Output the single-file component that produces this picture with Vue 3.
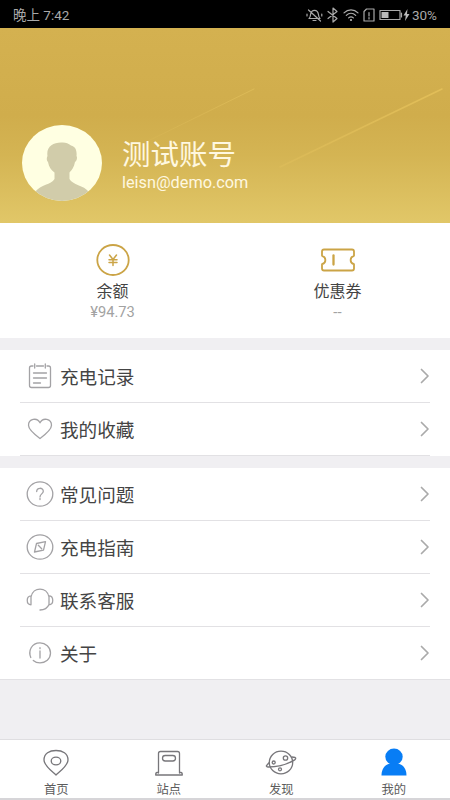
<script setup>
const groups = [
  [
    { icon: 'record', label: '充电记录' },
    { icon: 'heart', label: '我的收藏' },
  ],
  [
    { icon: 'question', label: '常见问题' },
    { icon: 'compass', label: '充电指南' },
    { icon: 'headset', label: '联系客服' },
    { icon: 'info', label: '关于' },
  ],
]
const tabs = [
  { icon: 'pin', label: '首页' },
  { icon: 'station', label: '站点' },
  { icon: 'planet', label: '发现' },
  { icon: 'me', label: '我的' },
]
</script>

<template>
  <div class="screen">
    <header class="status">
      <span class="time">晚上 7:42</span>
      <div class="indicators">
        <svg width="17" height="16" viewBox="0 0 17 16">
          <path d="M3 11.5c1.3-1 1.4-2.300 1.600-4.200C5 4.700 6.500 3.300 8.500 3.300s3.500 1.400 3.900 4c.2 1.900.4 3.200 1.600 4.200zM7 13.500h3M2.500 3l12 11M1 7v2M15.800 7v2" />
        </svg>
        <svg class="bluetooth" width="12" height="16" viewBox="0 0 12 16">
          <path d="M1 4.500l9 7L6 15V1l4 3.500-9 7" />
        </svg>
        <svg width="16" height="16" viewBox="0 0 16 16">
          <path d="M1 5.800c4-4 10-4 14 0M3.300 8.400c2.800-2.700 6.600-2.700 9.400 0M5.600 10.900c1.500-1.300 3.300-1.300 4.800 0" />
          <circle class="solid" cx="8" cy="13" r="1.100" />
        </svg>
        <svg width="12" height="14" viewBox="0 0 12 14">
          <path d="M3.500 1H11v12H1V3.500zM6 4.500v3.500M6 9.500V11" />
        </svg>
        <svg class="battery" width="24" height="12" viewBox="0 0 24 12">
          <path d="M1 1.500h20v9H1zM22.500 4v4" />
          <path class="solid" d="M2.500 3h7v6h-7z" />
        </svg>
        <svg class="bolt" width="7" height="12" viewBox="0 0 7 12">
          <path class="solid" d="M4.500 0L.5 6.500h2.300L2 12l4.500-7H4z" />
        </svg>
        <span class="percent">30%</span>
      </div>
    </header>

    <section class="hero">
      <svg class="streaks" width="450" height="195" viewBox="0 0 450 195">
        <defs>
          <linearGradient id="fadeA" x1="0" x2="1">
            <stop offset="0" stop-color="#e3c15d" stop-opacity=".15" />
            <stop offset="1" stop-color="#e3c15d" stop-opacity=".65" />
          </linearGradient>
          <linearGradient id="fadeB" x1="0" x2="1">
            <stop offset="0" stop-color="#e6c45f" stop-opacity=".3" />
            <stop offset="1" stop-color="#e2be58" />
          </linearGradient>
        </defs>
        <path stroke="url(#fadeA)" d="M148 113L254 61" />
        <path stroke="url(#fadeB)" stroke-width="1.500" d="M280 139L442 61" />
      </svg>
      <svg class="avatar" width="80" height="76" viewBox="0 0 80 76">
        <defs>
          <clipPath id="face"><ellipse cx="40" cy="38" rx="40" ry="38" /></clipPath>
        </defs>
        <g clip-path="url(#face)">
          <rect width="80" height="76" fill="#ffffe2" />
          <path
            fill="#d1ccaa"
            d="M26 37c-2-2-1-5-.5-6C24 22 31 17.500 39 17.500c4-.5 7 .5 10 3 5 1 6 6 5.500 10.500 1 1 .5 5-1.500 6-1 5-3 8-5.500 10.500V54c3 6 14 6 19.500 13v12H13V67c6-8 16-7 19.500-13v-6.500C29 45 27 42 26 37z"
          />
        </g>
      </svg>
      <div class="identity">
        <h1>测试账号</h1>
        <p>leisn@demo.com</p>
      </div>
    </section>

    <section class="assets">
      <div class="asset">
        <svg width="36" height="34" viewBox="0 0 36 34">
          <ellipse cx="18" cy="17" rx="15.700" ry="15" />
          <path class="yen" d="M14.500 12l3.500 4.500 3.500-4.500M18 16.500V22.500M14 16.800h8M14 19.600h8" />
        </svg>
        <span class="name">余额</span>
        <span class="value">¥94.73</span>
      </div>
      <div class="asset">
        <svg width="36" height="34" viewBox="0 0 36 34">
          <path d="M4 6.500h28q2 0 2 2v4.300c-4.500 1-4.500 7.400 0 8.400v4.300q0 2-2 2H4q-2 0-2-2v-4.300c4.500-1 4.500-7.400 0-8.400V8.500q0-2 2-2z" />
          <path class="bar" d="M13.500 12.500v9" />
        </svg>
        <span class="name">优惠券</span>
        <span class="value dash">--</span>
      </div>
    </section>

    <ul v-for="(group, i) in groups" :key="i" class="group">
      <li v-for="row in group" :key="row.label">
        <svg class="row-icon" width="28" height="28" viewBox="0 0 28 28">
          <template v-if="row.icon === 'record'">
            <path d="M7 4H5.500Q3.500 4 3.500 6v17.500q0 2 2 2h17q2 0 2-2V6q0-2-2-2H21M10.500 4h7M8.700 2v4M19.300 2v4" />
            <path d="M7.500 11h13M7.500 16h13M7.500 21h7" />
          </template>
          <path v-else-if="row.icon === 'heart'" d="M14 23.500C9 19.800 2.500 15 2.500 10.300c0-6.600 8.500-8.300 11.500-2.500 3-5.800 11.500-4.100 11.500 2.500 0 4.700-6.500 9.500-11.500 13.200z" />
          <template v-else-if="row.icon === 'question'">
            <ellipse cx="14" cy="14" rx="12.800" ry="12.200" />
            <path d="M10.700 11.500c0-4.300 6.600-4.200 6.600-.3 0 2.600-3.300 2.800-3.300 5.700M14 18.500v1" />
          </template>
          <template v-else-if="row.icon === 'compass'">
            <ellipse cx="14" cy="14" rx="12.800" ry="12.200" />
            <path d="M8.500 19l2-8.500 9-1.800-2 8.500zM12.300 12.300l3.400 3.400" />
          </template>
          <template v-else-if="row.icon === 'headset'">
            <path d="M5 18.500V11C7 .5 21 .5 23 11v7.500C21.500 22 18.500 24 14 24M5 9.800c-5 0-5 9 0 9M23 9.800c5 0 5 9 0 9" />
          </template>
          <template v-else>
            <path d="M4.800 18.500C2 12 5.500 3.900 14 3.900c5.500 0 10.500 4.100 10.500 10.100S19.500 23.800 14 23.800c-2.700 0-5-.9-6.700-2.400" />
            <path d="M14 12v7M14 8.700v1" />
          </template>
        </svg>
        <span class="label">{{ row.label }}</span>
        <svg class="chevron" width="10" height="16" viewBox="0 0 10 16">
          <path d="M1.500 1.500L8 8l-6.500 6.500" />
        </svg>
      </li>
    </ul>

    <nav class="tabs">
      <div v-for="tab in tabs" :key="tab.icon" class="tab">
        <svg width="32" height="30" viewBox="0 0 32 30">
          <template v-if="tab.icon === 'pin'">
            <path d="M16 27C11 22.500 4 17.500 4 12 4 5.500 9.500 2.500 16 2.500S28 5.500 28 12c0 5.500-7 10.500-12 15z" />
            <ellipse cx="16" cy="13" rx="4.800" ry="3.900" />
          </template>
          <template v-else-if="tab.icon === 'station'">
            <path d="M5.500 25V5.500q0-2 2-2h17q2 0 2 2V25M5.500 24.500H4q-1.300 0-1.300 2.500h26.600q0-2.500-1.300-2.500h-1.500" />
            <rect x="9.500" y="7.500" width="13" height="5.500" rx="2.700" />
          </template>
          <template v-else-if="tab.icon === 'planet'">
            <ellipse cx="16" cy="14.500" rx="11.700" ry="11.300" />
            <path d="M27 9l3.200.5c1 .3.300 1.900-.5 2.400C22 16.500 11 19 3.300 19c-1.800 0-2.300-1-1.500-1.700l2.500-2.800" />
            <circle cx="20.500" cy="10" r="2.200" />
            <circle cx="8.700" cy="14.500" r="1.500" />
            <circle cx="15" cy="21.300" r="1.500" />
          </template>
          <g v-else class="filled">
            <ellipse cx="16" cy="8.800" rx="8.700" ry="8.200" />
            <path d="M3.500 27.500c0-7 3.500-10.500 8-12h9c4.500 1.500 8 5 8 12z" />
          </g>
        </svg>
        <span>{{ tab.label }}</span>
      </div>
    </nav>
  </div>
</template>

<style>
body {
  margin: 0;
}
</style>

<style scoped>
.screen {
  display: flex;
  flex-direction: column;
  box-sizing: border-box;
  width: 450px;
  height: 800px;
  overflow: hidden;
  background: #f0eff2;
  border-bottom: 2px solid #d6d5d8;
  font-family: Roboto, "Noto Sans CJK SC", sans-serif;
  color: #444;
}
svg {
  display: block;
  flex: none;
  fill: none;
  stroke-linecap: round;
  stroke-linejoin: round;
}
.status {
  display: flex;
  flex: none;
  box-sizing: border-box;
  align-items: center;
  justify-content: space-between;
  height: 28px;
  padding: 2px 13px 0;
  background: #000;
  color: #a9a9a9;
  font-size: 14px;
  line-height: 20px;
}
.time {
  font-size: 13.500px;
}
.percent {
  font-size: 13.500px;
}
.indicators {
  display: flex;
  align-items: center;
  gap: 4px;
}
.indicators svg {
  stroke: #aaa;
  stroke-width: 1.200;
}
.indicators .solid {
  fill: #bbb;
  stroke: none;
}
.indicators .bolt {
  margin: 0 -2px 0 -4px;
}
.hero {
  position: relative;
  display: flex;
  flex: none;
  box-sizing: border-box;
  height: 195px;
  padding: 97px 0 0 22px;
  background: linear-gradient(#d4b150, #d0ad4c 45%, #d4b453 65%, #e1c768);
}
.streaks {
  position: absolute;
  inset: 0;
}
.avatar {
  position: relative;
}
.identity {
  position: relative;
  padding: 12px 0 0 20px;
  color: #fff8e0;
}
.identity h1 {
  margin: 0;
  font-size: 28.500px;
  font-weight: 400;
  line-height: 38px;
}
.identity p {
  margin: -2px 0 0;
  font-size: 16.300px;
  line-height: 20px;
}
.assets {
  display: flex;
  flex: none;
  box-sizing: border-box;
  height: 115px;
  padding-top: 20px;
  background: #fff;
}
.asset {
  display: flex;
  flex: 1;
  flex-direction: column;
  align-items: center;
}
.asset svg {
  stroke: #cba446;
  stroke-width: 1.800;
}
.asset .yen {
  stroke-width: 1.500;
}
.asset .bar {
  stroke-width: 2.300;
}
.name {
  margin-top: 4px;
  font-size: 16px;
  line-height: 22px;
}
.value {
  color: #a2a2a2;
  font-size: 14.700px;
  line-height: 19px;
}
.dash {
  font-size: 15px;
}
.group {
  flex: none;
  margin: 12px 0 0;
  padding: 0;
  background: #fff;
  list-style: none;
}
.group li {
  display: flex;
  box-sizing: border-box;
  align-items: center;
  height: 53px;
  margin: 0 20px;
  padding-left: 6px;
  border-bottom: 1px solid #e2e1e4;
}
.row-icon {
  stroke: #a3a2a5;
  stroke-width: 1.300;
}
.label {
  flex: 1;
  padding: 3px 0 0 6px;
  font-size: 18.600px;
  line-height: 26px;
}
.chevron {
  stroke: #aaa;
  stroke-width: 1.700;
}
.group + .group li:last-child {
  margin: 0;
  padding: 0 20px 0 26px;
}
.tabs {
  display: flex;
  flex: none;
  box-sizing: border-box;
  height: 59px;
  margin-top: auto;
  padding-top: 7px;
  border-top: 1px solid #dfdee1;
  background: #fff;
}
.tab {
  display: flex;
  flex: 1;
  flex-direction: column;
  align-items: center;
  color: #5c5c5c;
  font-size: 12.300px;
  line-height: 18px;
}
.tab svg {
  margin-top: 1px;
  stroke: #77767a;
  stroke-width: 1.300;
}
.tab span {
  margin-top: 3px;
}
.tab .filled {
  fill: #087df5;
  stroke: none;
}
</style>
